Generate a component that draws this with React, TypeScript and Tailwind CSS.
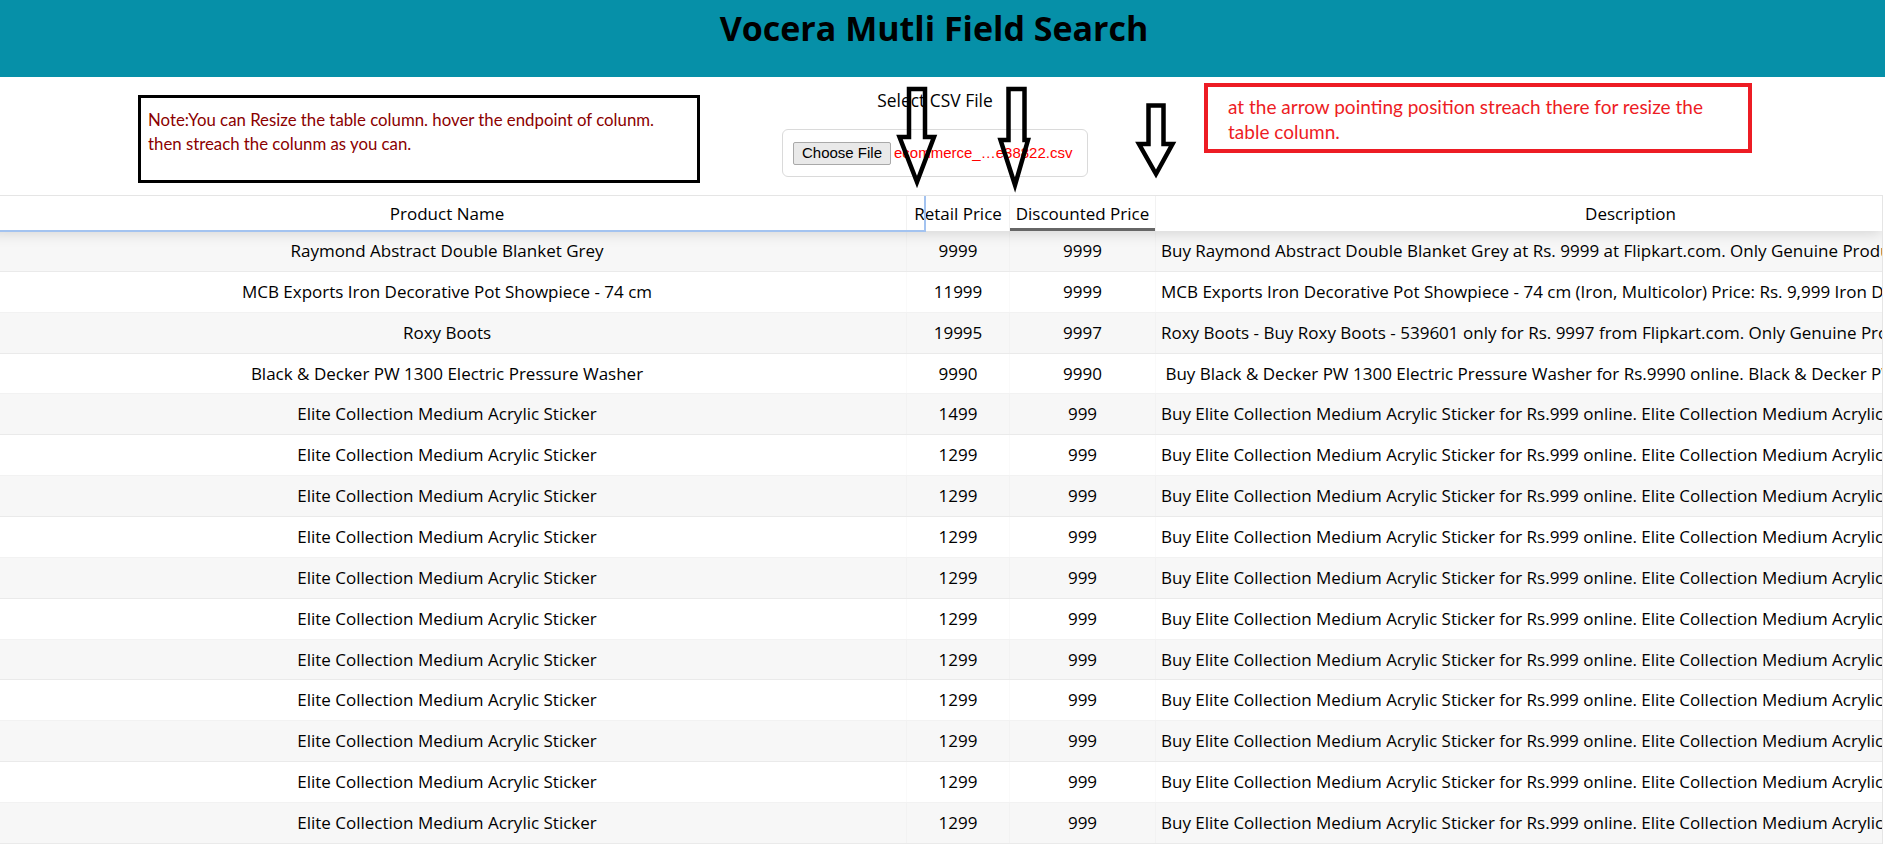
import React from "react";

type Row = {
  name: string;
  retail: string;
  discounted: string;
  desc: string;
};

const eliteDesc =
  "Buy Elite Collection Medium Acrylic Sticker for Rs.999 online. Elite Collection Medium Acrylic Sticker at best prices with FREE shipping & cash on delivery. Only Genuine Products. 30 Day Replacement Guarantee.";

const elite = (retail: string): Row => ({
  name: "Elite Collection Medium Acrylic Sticker",
  retail,
  discounted: "999",
  desc: eliteDesc,
});

const rows: Row[] = [
  {
    name: "Raymond Abstract Double Blanket Grey",
    retail: "9999",
    discounted: "9999",
    desc: "Buy Raymond Abstract Double Blanket Grey at Rs. 9999 at Flipkart.com. Only Genuine Products. Free Shipping. Cash On Delivery!",
  },
  {
    name: "MCB Exports Iron Decorative Pot Showpiece - 74 cm",
    retail: "11999",
    discounted: "9999",
    desc: "MCB Exports Iron Decorative Pot Showpiece - 74 cm (Iron, Multicolor) Price: Rs. 9,999 Iron Decorative Pot Showpiece for your home decor.",
  },
  {
    name: "Roxy Boots",
    retail: "19995",
    discounted: "9997",
    desc: "Roxy Boots - Buy Roxy Boots - 539601 only for Rs. 9997 from Flipkart.com. Only Genuine Products. 30 Day Replacement Guarantee.",
  },
  {
    name: "Black & Decker PW 1300 Electric Pressure Washer",
    retail: "9990",
    discounted: "9990",
    desc: "\u00a0Buy Black & Decker PW 1300 Electric Pressure Washer for Rs.9990 online. Black & Decker PW 1300 Electric Pressure Washer at best prices.",
  },
  elite("1499"),
  elite("1299"),
  elite("1299"),
  elite("1299"),
  elite("1299"),
  elite("1299"),
  elite("1299"),
  elite("1299"),
  elite("1299"),
  elite("1299"),
  elite("1299"),
  elite("1299"),
];

const cell =
  "shrink-0 h-full px-[5px] leading-[39.86px] text-center whitespace-nowrap overflow-hidden text-ellipsis border-r border-black/[0.02]";

const App = () => {
  return (
    <div className="relative w-full h-[844px] overflow-hidden bg-white text-black font-['Open_Sans',sans-serif]">
      {/* title bar */}
      <div className="h-[77px] bg-[#0690a8] pr-[17px]">
        <h1 className="pt-[4px] text-center text-[34px] leading-[48px] font-bold">
          Vocera Mutli Field Search
        </h1>
      </div>

      {/* note, file picker, hint */}
      <div className="flex items-start h-[118px]">
        <div className="ml-[138px] mt-[18px] w-[562px] h-[88px] border-[3px] border-black px-[7px] pt-[10px] font-['Lato',sans-serif] text-[16.8px] leading-[24px] text-[#8b0000]">
          <p>Note:You can Resize the table column. hover the endpoint of colunm.</p>
          <p>then streach the colunm as you can.</p>
        </div>

        <div className="ml-[82px] w-[306px] flex flex-col items-center">
          <p className="mt-[11px] text-[17.4px] leading-[24px]">Select CSV File</p>
          <div className="mt-[17px] w-[306px] h-[48px] border border-[#dadada] rounded-[6px] px-[10px] flex items-center font-['Liberation_Sans',Arial,sans-serif] text-[15px]">
            <span className="h-[23px] w-[98px] flex items-center justify-center border border-[#a9a9a9] bg-[#e9e9e9] rounded-[2px] text-black">
              Choose File
            </span>
            <span className="ml-[3px] text-[#ff0000] whitespace-nowrap">ecommerce_…e38822.csv</span>
          </div>
        </div>

        <div className="ml-[116px] mt-[6px] w-[548px] h-[70px] border-4 border-[#ed1c24] pl-[20px] pt-[7px] font-['Lato',sans-serif] text-[19px] leading-[25px] text-[#ed1c24]">
          <p>at the arrow pointing position streach there for resize the</p>
          <p>table column.</p>
        </div>
      </div>

      {/* table */}
      <div className="relative -ml-[13px] w-[1896px] border border-black/10 overflow-hidden text-[17px]">
        <div className="absolute left-0 -top-px w-[938px] h-[37px] z-20 border-t border-t-[#c6d6ec] border-r-2 border-b-2 border-[#a3c3f0]" />
        <div className="relative z-10 flex bg-white shadow-[0_2px_15px_0_rgba(0,0,0,0.15)]">
          <div className="shrink-0 w-[919px] h-[35px] flex items-center justify-center border-r border-black/5">Product Name</div>
          <div className="shrink-0 w-[103px] h-[35px] flex items-center justify-center border-r border-black/5">Retail Price</div>
          <div className="shrink-0 w-[146px] h-[35px] flex items-center justify-center border-r border-black/5 shadow-[inset_0_-3px_0_0_rgba(0,0,0,0.6)]">Discounted Price</div>
          <div className="shrink-0 w-[950px] h-[35px] flex items-center justify-center border-r border-black/5">Description</div>
        </div>
        {rows.map((r, i) => (
          <div
            key={i}
            className={`flex h-[40.86px] border-b border-black/5 ${i % 2 === 0 ? "bg-black/[0.03]" : "bg-white"}`}
          >
            <div className={`${cell} w-[919px]`}>{r.name}</div>
            <div className={`${cell} w-[103px]`}>{r.retail}</div>
            <div className={`${cell} w-[146px]`}>{r.discounted}</div>
            <div className={`${cell} w-[950px]`}>{r.desc}</div>
          </div>
        ))}
      </div>

      {/* arrows drawn over the page */}
      <svg
        className="absolute left-[890px] top-[80px] z-30"
        width="295"
        height="115"
        viewBox="890 80 295 115"
        fill="none"
        stroke="#000"
        strokeWidth="4.5"
        strokeLinejoin="miter"
        strokeMiterlimit="10"
      >
        <polygon points="909,89 925,89 925,137 934,137 917,182 899.5,137 909,137" />
        <polygon points="1008.5,89 1024.5,89 1024.5,140 1028,140 1015,185 1000.5,140 1008.5,140" />
        <polygon points="1148.5,105.5 1163.5,105.5 1163.5,144 1172.5,144 1156,174 1139,144 1148.5,144" />
      </svg>
    </div>
  );
};

export default App;
